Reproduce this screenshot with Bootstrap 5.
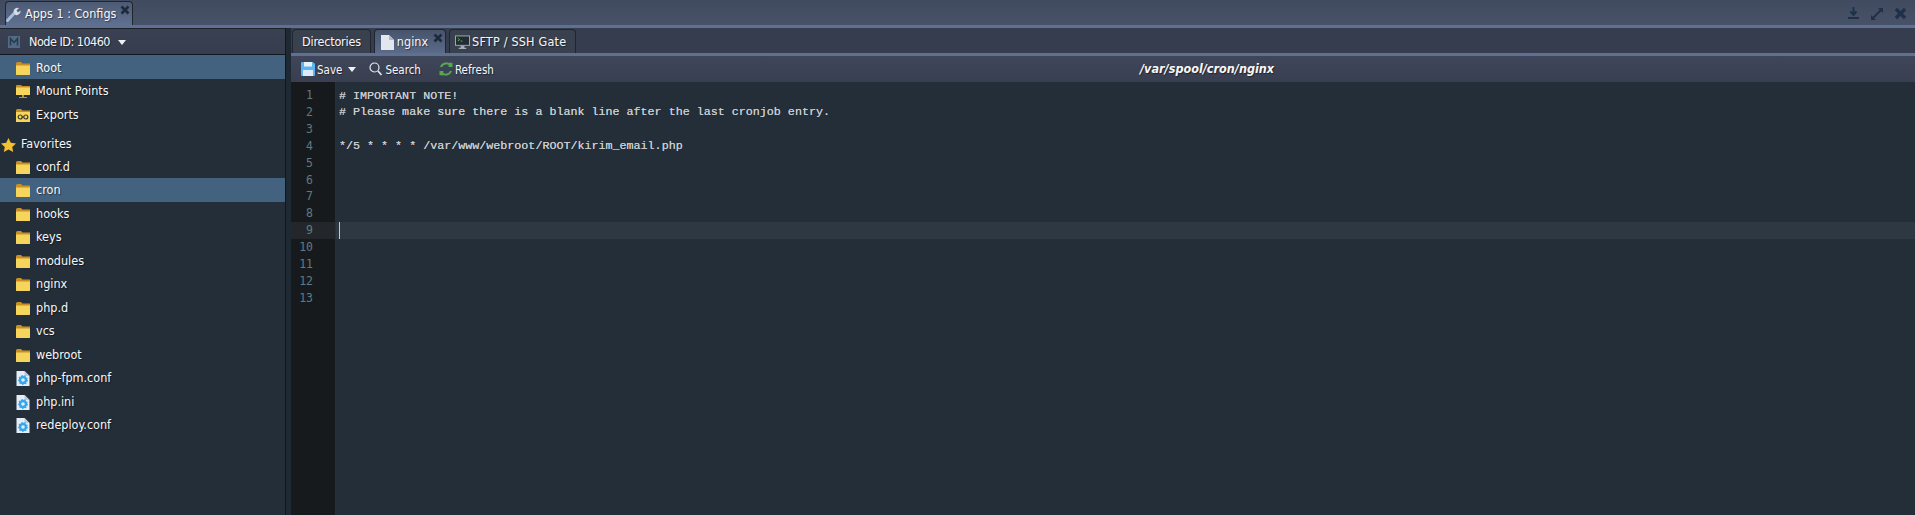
<!DOCTYPE html>
<html lang="en">
<head>
<meta charset="utf-8">
<title>Apps 1 : Configs</title>
<link href="https://cdn.jsdelivr.net/npm/bootstrap@5.3.0/dist/css/bootstrap.min.css" rel="stylesheet">
<style>
html,body{height:515px;overflow:hidden;background:#242e39;}
body{font-family:"DejaVu Sans Condensed","DejaVu Sans",sans-serif;font-size:12.5px;color:#f6f7f8;width:1915px;text-shadow:1px 1px 1px rgba(0,0,0,.45);}
.ui-top{height:28px;background:linear-gradient(#414b5f,#475268);border-bottom:3px solid #5f7090;padding:1px 0 0 5px;}
.ui-tab{height:24px;border:1px solid #20262f;border-bottom:0;border-radius:4px 4px 0 0;background:#3d4658;padding:2px 9px 0;position:relative;gap:4px;white-space:nowrap;}
.ui-tab.on{background:linear-gradient(#4d5a73,#5f7090);}
.ui-close{position:absolute;right:2px;top:3px;}
.ui-wins{gap:10px;padding-right:8px;margin-top:1px;}
.ui-main{height:487px;}
.ui-side{width:286px;background:#242e39;border-right:1px solid #12171d;flex:none;}
.ui-split{width:5px;background:#1f2933;flex:none;}
.ui-node{height:27px;background:linear-gradient(#3a4153,#363d4e);border-top:1px solid #1c222a;border-bottom:1px solid #14181e;padding:1px 0 0 8px;gap:9px;}
.ui-nodeid{letter-spacing:-.5px;padding-top:1px;}
.ui-caret{width:0;height:0;border-left:4px solid transparent;border-right:4px solid transparent;border-top:5px solid #f0f2f4;margin-left:-1px;}
.ui-row{height:23.5px;padding:1.5px 0 0 16px;gap:6px;white-space:nowrap;}
.ui-row.ui-first{padding-top:3px;}
.ui-row.sel{background:#42627f;}
.ui-fav{height:29px;padding:9px 0 0 1px;gap:5px;}
.ui-right{flex:1;min-width:0;background:#242e39;}
.ui-tabs{height:25px;background:#363d4e;padding:1px 0 0 1px;gap:3px;}
.ui-tabs .ui-tab{height:24px;background:#39414f;}
.ui-tabs .ui-tab.on{background:linear-gradient(#48546c,#5a6a88);padding-right:17px;gap:3px;}
.ui-tight{letter-spacing:-.2px;}
.ui-wide{letter-spacing:.2px;}
.ui-strip{height:3px;background:#5f7090;}
.ui-tools{height:26px;background:linear-gradient(#3f4659,#393f51);padding-left:10px;position:relative;font-size:11.5px;}
.ui-btn{gap:2px;white-space:nowrap;}
.ui-btn span.ui-txt{padding-top:3px;}
.ui-path{position:absolute;left:849px;top:4px;font-weight:700;font-style:italic;font-size:12.5px;}
.ui-edit{height:433px;}
.ui-gutter{width:45px;background:#171a1d;color:#5f7a85;font:11.5px/16.9px "DejaVu Sans Mono",monospace;text-align:right;padding:5px 22px 0 0;flex:none;border-right:1px solid #22323c;text-shadow:none;}
.ui-gutter div.cur{background:#23272b;margin-right:-22px;padding-right:22px;}
.ui-code{flex:1;padding-top:4.500px;font:400 11.7px/18.9px "Liberation Mono",monospace;color:#c8cbce;text-shadow:0 0 .3px #c8cbce;}
.ui-line{height:16.9px;padding-left:3px;white-space:pre;}
.ui-line.cur{background:#2e3843;position:relative;}
.ui-cursor{display:inline-block;width:1px;height:17px;background:#c4c8cb;vertical-align:top;}
svg{flex:none;display:block;}
</style>
</head>
<body>
<svg width="0" height="0" class="position-absolute">
<defs>
<symbol id="ic-folder" viewBox="0 0 14 13"><path d="M0 1.500Q0 0 1.500 0H5L6.500 1.500H14V13H0Z" fill="#c98f24"/><path d="M0 3.500H14V12Q14 13 13 13H1Q0 13 0 12Z" fill="#f6d55c"/></symbol>
<symbol id="ic-file" viewBox="0 0 13 15"><path d="M0 0H8L13 5V15H0Z" fill="#e4edf5"/><path d="M8 0L13 5H8Z" fill="#b9c9d8"/><circle cx="6.500" cy="9" r="3" fill="none" stroke="#35a6ee" stroke-width="2.400"/><circle cx="6.500" cy="9" r="4.300" fill="none" stroke="#35a6ee" stroke-width="1.200" stroke-dasharray="1.500 1.500"/></symbol>
<symbol id="ic-x" viewBox="0 0 10 10"><path d="M1.500 1.500L8.500 8.500M8.500 1.500L1.500 8.500" stroke="currentColor" stroke-width="2.600"/></symbol>
</defs>
</svg>
<div class="ui-top d-flex justify-content-between">
  <div class="ui-tab on d-flex align-items-center" style="padding:2px 16px 0 0">
    <svg width="15" height="15" viewBox="0 0 15 15"><path d="M1.500 13.500L8 6.500" stroke="#a8c0dc" stroke-width="3" stroke-linecap="round"/><path d="M7.500 5A4 4 0 0 1 13 1L10.500 3.500L12 5.500L14.500 3.500A4 4 0 0 1 9.500 8Z" fill="#d5dfeb"/></svg>
    <span>Apps 1 : Configs</span>
    <svg class="ui-close" width="10" height="10" style="color:#1d2a3c"><use href="#ic-x"/></svg>
  </div>
  <div class="ui-wins d-flex align-items-center">
    <svg width="13" height="13" viewBox="0 0 13 13"><path d="M6.500 0V7M3.500 4.500L6.500 8L9.500 4.500" fill="none" stroke="#1f3048" stroke-width="2"/><path d="M1 11H12" stroke="#1f3048" stroke-width="2"/></svg>
    <svg width="14" height="14" viewBox="0 0 14 14"><path d="M3 11L11 3" stroke="#1f3048" stroke-width="2"/><path d="M8 1H13V6ZM1 8V13H6Z" fill="#1f3048"/></svg>
    <svg width="13" height="13" style="color:#1f3048"><use href="#ic-x"/></svg>
  </div>
</div>
<div class="ui-main d-flex">
  <div class="ui-side">
    <div class="ui-node d-flex align-items-center">
      <svg width="12" height="12" viewBox="0 0 12 12"><rect width="12" height="12" fill="#516a85"/><path d="M2.500 9.500V2.500L6 6.500L9.500 2.500V9.500" fill="none" stroke="#2b3a4d" stroke-width="1.500"/></svg>
      <span class="ui-nodeid">Node ID: 10460</span><span class="ui-caret"></span>
    </div>
    <div class="ui-row ui-first sel d-flex align-items-center"><svg width="14" height="13"><use href="#ic-folder"/></svg>Root</div>
    <div class="ui-row ui-first d-flex align-items-center"><svg width="14" height="14" viewBox="0 0 14 14"><path d="M0 1Q0 0 1 0H5L6 1H14V3H0Z" fill="#c98f24"/><path d="M0 2.500H14V10H0Z" fill="#f6d55c"/><path d="M6 10H8V12H11V13H3V12H6Z" fill="#c98f24"/></svg>Mount Points</div>
    <div class="ui-row ui-first d-flex align-items-center"><svg width="14" height="13" viewBox="0 0 14 13"><path d="M0 1.500Q0 0 1.500 0H5L6.500 1.500H14V13H0Z" fill="#c98f24"/><path d="M0 3H14V13H0Z" fill="#f6d55c"/><circle cx="4.200" cy="8" r="2" fill="none" stroke="#3a3a30" stroke-width="1.200"/><circle cx="9.800" cy="8" r="2" fill="none" stroke="#3a3a30" stroke-width="1.200"/><path d="M6 8H8" stroke="#3a3a30" stroke-width="1.200"/></svg>Exports</div>
    <div class="ui-fav d-flex align-items-center"><svg width="15" height="14" viewBox="0 0 15 14"><path d="M7.500 0L9.800 4.700L15 5.400L11.200 9L12.200 14L7.500 11.600L2.800 14L3.800 9L0 5.400L5.200 4.700Z" fill="#f3c12f"/></svg>Favorites</div>
    <div class="ui-row d-flex align-items-center"><svg width="14" height="13"><use href="#ic-folder"/></svg>conf.d</div>
    <div class="ui-row sel d-flex align-items-center"><svg width="14" height="13"><use href="#ic-folder"/></svg>cron</div>
    <div class="ui-row d-flex align-items-center"><svg width="14" height="13"><use href="#ic-folder"/></svg>hooks</div>
    <div class="ui-row d-flex align-items-center"><svg width="14" height="13"><use href="#ic-folder"/></svg>keys</div>
    <div class="ui-row d-flex align-items-center"><svg width="14" height="13"><use href="#ic-folder"/></svg>modules</div>
    <div class="ui-row d-flex align-items-center"><svg width="14" height="13"><use href="#ic-folder"/></svg>nginx</div>
    <div class="ui-row d-flex align-items-center"><svg width="14" height="13"><use href="#ic-folder"/></svg>php.d</div>
    <div class="ui-row d-flex align-items-center"><svg width="14" height="13"><use href="#ic-folder"/></svg>vcs</div>
    <div class="ui-row d-flex align-items-center"><svg width="14" height="13"><use href="#ic-folder"/></svg>webroot</div>
    <div class="ui-row d-flex align-items-center"><svg width="14" height="15"><use href="#ic-file"/></svg>php-fpm.conf</div>
    <div class="ui-row d-flex align-items-center"><svg width="14" height="15"><use href="#ic-file"/></svg>php.ini</div>
    <div class="ui-row d-flex align-items-center"><svg width="14" height="15"><use href="#ic-file"/></svg>redeploy.conf</div>
  </div>
  <div class="ui-split"></div>
  <div class="ui-right">
    <div class="ui-tabs d-flex">
      <div class="ui-tab ui-tight d-flex align-items-center">Directories</div>
      <div class="ui-tab on d-flex align-items-center" style="padding-left:6px">
        <svg width="13" height="15" viewBox="0 0 13 15"><path d="M0 0H8L13 5V15H0Z" fill="#e2e7ed"/><path d="M8 0L13 5H8Z" fill="#aeb8c4"/></svg>nginx
        <svg class="ui-close" width="10" height="10" style="color:#1d2a3c"><use href="#ic-x"/></svg>
      </div>
      <div class="ui-tab ui-wide d-flex align-items-center" style="padding-left:5px;gap:2px">
        <svg width="15" height="15" viewBox="0 0 16 15"><rect x=".5" y=".5" width="15" height="10" fill="#232b33" stroke="#a5adb6"/><path d="M3 3L5 4.500L3 6M6 6H8" stroke="#5cb85c" fill="none"/><path d="M6 11H10V13H12V14.500H4V13H6Z" fill="#a5adb6"/></svg>SFTP / SSH Gate
      </div>
    </div>
    <div class="ui-strip"></div>
    <div class="ui-tools d-flex align-items-center">
      <div class="ui-btn d-flex align-items-center"><svg width="14" height="14" viewBox="0 0 14 14"><path d="M0 1Q0 0 1 0H12L14 2V13Q14 14 13 14H1Q0 14 0 13Z" fill="#5db4f2"/><rect x="3" y="0" width="8" height="4.500" fill="#e7f3fb"/><rect x="2" y="8" width="10" height="6" fill="#dcebf7"/></svg><span class="ui-txt">Save</span><span class="ui-caret" style="margin-left:4px"></span></div>
      <div class="ui-btn d-flex align-items-center" style="margin-left:13px;gap:3px"><svg width="13" height="14" viewBox="0 0 13 14"><circle cx="5.500" cy="5.500" r="4.500" fill="none" stroke="#e5e8ec" stroke-width="1.200"/><path d="M9 9L12.500 13" stroke="#e5e8ec" stroke-width="1.600"/></svg><span class="ui-txt">Search</span></div>
      <div class="ui-btn d-flex align-items-center" style="margin-left:18px"><svg width="14" height="14" viewBox="0 0 14 14"><path d="M2 5A5.500 5.500 0 0 1 11.500 3.500" fill="none" stroke="#55a84f" stroke-width="2"/><path d="M10 0.500L13.500 1V5H9.500Z" fill="#55a84f"/><path d="M12 9A5.500 5.500 0 0 1 2.500 10.500" fill="none" stroke="#55a84f" stroke-width="2"/><path d="M4 13.500L.5 13V9H4.500Z" fill="#55a84f"/></svg><span class="ui-txt">Refresh</span></div>
      <div class="ui-path">/var/spool/cron/nginx</div>
    </div>
    <div class="ui-edit d-flex">
      <div class="ui-gutter"><div>1</div><div>2</div><div>3</div><div>4</div><div>5</div><div>6</div><div>7</div><div>8</div><div class="cur">9</div><div>10</div><div>11</div><div>12</div><div>13</div></div>
      <div class="ui-code">
        <div class="ui-line"># IMPORTANT NOTE!</div>
        <div class="ui-line"># Please make sure there is a blank line after the last cronjob entry.</div>
        <div class="ui-line"></div>
        <div class="ui-line">*/5 * * * * /var/www/webroot/ROOT/kirim_email.php</div>
        <div class="ui-line"></div><div class="ui-line"></div><div class="ui-line"></div><div class="ui-line"></div>
        <div class="ui-line cur"><span class="ui-cursor"></span></div>
      </div>
    </div>
  </div>
</div>
<script src="https://cdn.jsdelivr.net/npm/bootstrap@5.3.0/dist/js/bootstrap.bundle.min.js"></script>
</body>
</html>
